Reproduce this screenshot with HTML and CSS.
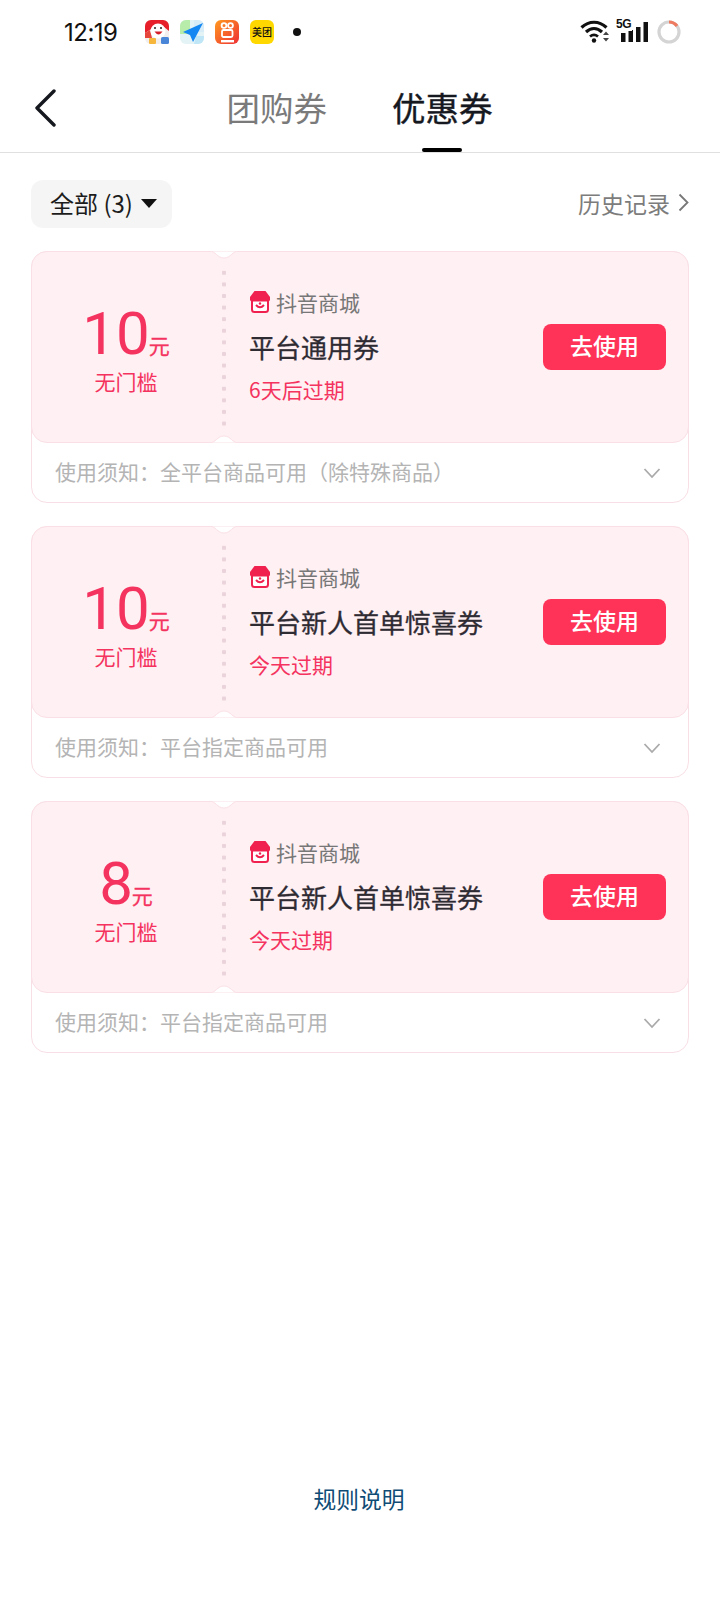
FILE: index.html
```html
<!DOCTYPE html>
<html lang="zh-CN">
<head>
<meta charset="UTF-8">
<title>优惠券</title>
<link rel="stylesheet" href="styles.css">
</head>
<body>
<div class="page">

  <div class="status">
    <span class="time">12:19</span>
    <div class="apps">
      <svg class="app" viewBox="0 0 24 24"><rect width="24" height="24" rx="6" fill="#f3eeee"/><path d="M0 13V6a6 6 0 0 1 6-6h12a6 6 0 0 1 6 6v5l-5-4-11 1z" fill="#e61f2b"/><path d="M0 13l5-3 2 8H0z" fill="#e5453a"/><circle cx="13" cy="11" r="7.500" fill="#fff"/><path d="M9.500 11.500q4 6 8 0z" fill="#d5202a"/><circle cx="10" cy="8" r="1" fill="#222"/><circle cx="16" cy="8" r="1" fill="#222"/><rect x="4" y="18" width="7" height="6" rx="1" fill="#f6b73c"/><rect x="16" y="17" width="8" height="7" rx="1.500" fill="#4a86d8"/></svg>
      <svg class="app" viewBox="0 0 24 24"><rect width="24" height="24" rx="6" fill="#e4f3f6"/><path d="M0 6a6 6 0 0 1 6-6h4v14H0z" fill="#b7ecab"/><path d="M14 0h4a6 6 0 0 1 6 6v6H14z" fill="#d7ecf7"/><path d="M14 24h4a6 6 0 0 0 6-6v-2h-8z" fill="#bfe6f7"/><path d="M23 3L3 12l7 3 3 7z" fill="#1487f2"/></svg>
      <svg class="app" viewBox="0 0 24 24"><defs><linearGradient id="ks" x1="0" y1="0" x2="1" y2="1"><stop offset="0" stop-color="#ff9a1f"/><stop offset="1" stop-color="#ee2f35"/></linearGradient></defs><rect width="24" height="24" rx="6" fill="url(#ks)"/><circle cx="9" cy="5.500" r="2.400" fill="none" stroke="#fff" stroke-width="1.800"/><circle cx="15.500" cy="5.500" r="2.400" fill="none" stroke="#fff" stroke-width="1.800"/><rect x="7" y="10" width="10.500" height="7" rx="1.500" fill="none" stroke="#fff" stroke-width="1.800"/><rect x="6" y="20" width="13" height="2.400" fill="#fff"/></svg>
      <div class="app app-mt">美团</div>
    </div>
    <span class="status-dot"></span>
    <div class="sys">
      <svg class="wifi" width="30" height="24" viewBox="0 0 30 24"><path d="M1.500 7.500C9 .5 19 .5 26.500 7.500" fill="none" stroke="#111" stroke-width="3.200"/><path d="M6 12c5-4.500 11-4.500 16 0" fill="none" stroke="#111" stroke-width="3.200"/><path d="M10 16.500c2.500-2 5.500-2 8 0" fill="none" stroke="#111" stroke-width="2.800"/><circle cx="14" cy="20.500" r="2.200" fill="#111"/><path d="M23 15l3-3.500 3 3.500zM23 18l3 3.500 3-3.500z" fill="#444"/></svg>
      <div class="signal">
        <span class="five-g">5G</span>
        <svg width="30" height="24" viewBox="0 0 30 24"><rect x="2" y="13" width="4.500" height="9" fill="#111"/><rect x="9.500" y="10" width="4.500" height="12" fill="#111"/><rect x="17" y="7" width="4.500" height="15" fill="#111"/><rect x="24.500" y="2" width="4.500" height="20" fill="#111"/></svg>
      </div>
      <svg class="battery" width="24" height="24" viewBox="0 0 24 24"><circle cx="12" cy="12" r="10" fill="none" stroke="#d4d4d4" stroke-width="3.200"/><path d="M12 2a10 10 0 0 1 8 4" fill="none" stroke="#ee7a5f" stroke-width="3.200"/></svg>
    </div>
  </div>

  <div class="nav">
    <svg class="back" width="24" height="38" viewBox="0 0 24 38"><path d="M20 2L3 19l17 17" fill="none" stroke="#16181f" stroke-width="3.400" stroke-linecap="round" stroke-linejoin="round"/></svg>
    <div class="tabs">
      <span class="tab">团购券</span>
      <span class="tab tab-on">优惠券</span>
    </div>
  </div>

  <div class="filters">
    <div class="chip">全部 (3)<span class="caret"></span></div>
    <div class="history">历史记录<svg width="11" height="19" viewBox="0 0 11 19"><path d="M1.500 1.500l8 8-8 8" fill="none" stroke="#777" stroke-width="1.800"/></svg></div>
  </div>

  <div class="list">

    <div class="card">
      <div class="ticket">
        <svg class="notch notch-top" width="30" height="8" viewBox="0 0 30 8"><path d="M0 0C7 0 8 7 15 7S23 0 30 0Z" fill="#fff" stroke="#fae0e6"/></svg>
        <svg class="notch notch-bot" width="30" height="8" viewBox="0 0 30 8"><path d="M0 8C7 8 8 1 15 1S23 8 30 8Z" fill="#fff" stroke="#fae0e6"/></svg>
        <div class="stub">
          <div class="amount"><span class="num">10</span><span class="unit">元</span></div>
          <div class="cond">无门槛</div>
        </div>
        <div class="dots"></div>
        <div class="info">
          <div class="brand">
            <svg class="shop" width="20" height="22" viewBox="0 0 20 22"><rect x="2" y="8" width="16" height="13" rx="2.500" fill="#fff" stroke="#f0214f" stroke-width="2"/><path d="M4.500 0h11L20 6v2.500a2 2 0 0 1-2 2H2a2 2 0 0 1-2-2V6z" fill="#f0214f"/><path d="M6 14q4 4.500 8 0" fill="none" stroke="#f0214f" stroke-width="2"/><circle cx="10" cy="12.500" r="1.200" fill="#f0214f"/></svg>
            抖音商城
          </div>
          <div class="title">平台通用券</div>
          <div class="expire">6天后过期</div>
        </div>
        <div class="use">去使用</div>
      </div>
      <div class="notice">
        <span>使用须知：全平台商品可用（除特殊商品）</span>
        <svg width="18" height="12" viewBox="0 0 18 12"><path d="M1.500 2l7.500 8 7.500-8" fill="none" stroke="#aaa" stroke-width="1.800"/></svg>
      </div>
    </div>

    <div class="card">
      <div class="ticket">
        <svg class="notch notch-top" width="30" height="8" viewBox="0 0 30 8"><path d="M0 0C7 0 8 7 15 7S23 0 30 0Z" fill="#fff" stroke="#fae0e6"/></svg>
        <svg class="notch notch-bot" width="30" height="8" viewBox="0 0 30 8"><path d="M0 8C7 8 8 1 15 1S23 8 30 8Z" fill="#fff" stroke="#fae0e6"/></svg>
        <div class="stub">
          <div class="amount"><span class="num">10</span><span class="unit">元</span></div>
          <div class="cond">无门槛</div>
        </div>
        <div class="dots"></div>
        <div class="info">
          <div class="brand">
            <svg class="shop" width="20" height="22" viewBox="0 0 20 22"><rect x="2" y="8" width="16" height="13" rx="2.500" fill="#fff" stroke="#f0214f" stroke-width="2"/><path d="M4.500 0h11L20 6v2.500a2 2 0 0 1-2 2H2a2 2 0 0 1-2-2V6z" fill="#f0214f"/><path d="M6 14q4 4.500 8 0" fill="none" stroke="#f0214f" stroke-width="2"/><circle cx="10" cy="12.500" r="1.200" fill="#f0214f"/></svg>
            抖音商城
          </div>
          <div class="title">平台新人首单惊喜券</div>
          <div class="expire">今天过期</div>
        </div>
        <div class="use">去使用</div>
      </div>
      <div class="notice">
        <span>使用须知：平台指定商品可用</span>
        <svg width="18" height="12" viewBox="0 0 18 12"><path d="M1.500 2l7.500 8 7.500-8" fill="none" stroke="#aaa" stroke-width="1.800"/></svg>
      </div>
    </div>

    <div class="card">
      <div class="ticket">
        <svg class="notch notch-top" width="30" height="8" viewBox="0 0 30 8"><path d="M0 0C7 0 8 7 15 7S23 0 30 0Z" fill="#fff" stroke="#fae0e6"/></svg>
        <svg class="notch notch-bot" width="30" height="8" viewBox="0 0 30 8"><path d="M0 8C7 8 8 1 15 1S23 8 30 8Z" fill="#fff" stroke="#fae0e6"/></svg>
        <div class="stub">
          <div class="amount"><span class="num">8</span><span class="unit">元</span></div>
          <div class="cond">无门槛</div>
        </div>
        <div class="dots"></div>
        <div class="info">
          <div class="brand">
            <svg class="shop" width="20" height="22" viewBox="0 0 20 22"><rect x="2" y="8" width="16" height="13" rx="2.500" fill="#fff" stroke="#f0214f" stroke-width="2"/><path d="M4.500 0h11L20 6v2.500a2 2 0 0 1-2 2H2a2 2 0 0 1-2-2V6z" fill="#f0214f"/><path d="M6 14q4 4.500 8 0" fill="none" stroke="#f0214f" stroke-width="2"/><circle cx="10" cy="12.500" r="1.200" fill="#f0214f"/></svg>
            抖音商城
          </div>
          <div class="title">平台新人首单惊喜券</div>
          <div class="expire">今天过期</div>
        </div>
        <div class="use">去使用</div>
      </div>
      <div class="notice">
        <span>使用须知：平台指定商品可用</span>
        <svg width="18" height="12" viewBox="0 0 18 12"><path d="M1.500 2l7.500 8 7.500-8" fill="none" stroke="#aaa" stroke-width="1.800"/></svg>
      </div>
    </div>

  </div>

  <div class="rules">规则说明</div>

</div>
</body>
</html>
```

FILE: styles.css
```css
* {
  box-sizing: border-box;
}

body {
  margin: 0;
  background-color: #fff;
  font-family: "Noto Sans CJK SC", Roboto, sans-serif;
}

.page {
  height: 1612px;
  display: flex;
  flex-direction: column;
}

/* barra de estado */
.status {
  height: 64px;
  display: flex;
  align-items: center;
  padding-left: 64px;
}

.time {
  font-family: Inter, Roboto, sans-serif;
  font-size: 24px;
  letter-spacing: -0.5px;
  color: #111;
  width: 81px;
}

.apps {
  display: flex;
  gap: 11px;
}

.app {
  width: 24px;
  height: 24px;
  display: block;
}

.app-mt {
  background-color: #ffd800;
  border-radius: 6px;
  font-size: 10px;
  line-height: 24px;
  text-align: center;
  color: #111;
  font-weight: 500;
}

.status-dot {
  width: 8px;
  height: 8px;
  border-radius: 50%;
  background-color: #111;
  margin-left: 19px;
}

.sys {
  margin-left: auto;
  display: flex;
  align-items: center;
  padding-right: 39px;
}

.signal {
  position: relative;
  margin-left: 9px;
  width: 30px;
  height: 24px;
}

.signal svg {
  display: block;
}

.five-g {
  position: absolute;
  left: -3px;
  top: -3px;
  font-family: "Liberation Sans", sans-serif;
  font-weight: 700;
  font-size: 12px;
  letter-spacing: -0.5px;
  color: #111;
  background-color: #fff;
  line-height: 14px;
  padding-right: 1px;
}

.battery {
  margin-left: 8px;
}

/* cabecera */
.nav {
  height: 89px;
  position: relative;
  border-bottom: 1px solid #e0e0e0;
  display: flex;
  justify-content: center;
}

.back {
  position: absolute;
  left: 34px;
  top: 25px;
}

.tabs {
  display: flex;
  gap: 65px;
  padding-right: 1px;
}

.tab {
  position: relative;
  font-size: 33.5px;
  line-height: 44px;
  padding-top: 21px;
  color: #7a7a7a;
}

.tab-on {
  color: #16181f;
  -webkit-text-stroke: 0.4px #16181f;
}

.tab-on::after {
  content: "";
  position: absolute;
  left: 30px;
  bottom: 0;
  width: 40px;
  height: 4px;
  border-radius: 2px;
  background-color: #000;
}

/* filtros */
.filters {
  display: flex;
  justify-content: space-between;
  align-items: center;
  padding: 27px 31px 23px;
}

.chip {
  width: 141px;
  height: 48px;
  border-radius: 12px;
  background-color: #f5f5f5;
  display: flex;
  align-items: center;
  padding: 0 0 3px 19px;
  font-size: 24px;
  color: #1c1c1c;
}

.caret {
  margin: 2px 0 0 8px;
  border-left: 8px solid transparent;
  border-right: 8px solid transparent;
  border-top: 9px solid #111;
}

.history {
  display: flex;
  align-items: center;
  gap: 8px;
  padding-bottom: 3px;
  font-size: 23px;
  color: #7c7c7c;
}

/* cupones */
.list {
  display: flex;
  flex-direction: column;
  gap: 23px;
  padding: 0 31px;
}

.card {
  height: 252px;
  border: 1px solid #f8dfe5;
  border-radius: 16px;
  background-color: #fff;
}

.ticket {
  position: relative;
  height: 192px;
  margin: -1px -1px 0;
  border: 1px solid #fae0e6;
  border-radius: 16px;
  background-color: #fff0f3;
  display: flex;
  align-items: center;
}

.notch {
  position: absolute;
  left: 177px;
}

.notch-top {
  top: -1px;
}

.notch-bot {
  bottom: -1px;
}

.stub {
  width: 188px;
  text-align: center;
  padding-top: 4px;
}

.amount {
  color: #f4335f;
  line-height: 62px;
  height: 63px;
}

.num {
  font-family: Roboto, sans-serif;
  font-size: 60px;
}

.unit {
  font-size: 21px;
  margin-left: -1px;
  -webkit-text-stroke: 0.3px #f4335f;
}

.cond {
  font-size: 21px;
  line-height: 30px;
  color: #f4335f;
}

.dots {
  position: absolute;
  left: 190px;
  top: 15px;
  bottom: 14px;
  width: 4px;
  background-image: radial-gradient(circle, #ead3da 2px, transparent 2.5px);
  background-size: 4px 11.6px;
}

.info {
  flex: 1;
  padding-left: 29px;
  margin-top: -2px;
}

.brand {
  display: flex;
  align-items: center;
  gap: 6px;
  font-size: 21px;
  line-height: 30px;
  color: #777;
  margin-top: -1px;
  padding-left: 1px;
}

.title {
  font-size: 26px;
  line-height: 38px;
  margin-top: 11px;
  color: #2f2b33;
  -webkit-text-stroke: 0.3px #2f2b33;
}

.expire {
  font-size: 21px;
  line-height: 30px;
  margin-top: 8px;
  color: #f4335f;
}

.use {
  width: 123px;
  height: 46px;
  margin-right: 22px;
  border-radius: 8px;
  background-color: #ff3358;
  color: #fff;
  font-size: 23px;
  font-weight: 500;
  line-height: 42px;
  text-align: center;
}

.notice {
  height: 59px;
  display: flex;
  justify-content: space-between;
  align-items: center;
  padding: 0 27px 0 23px;
  font-size: 21px;
  color: #b4b4b4;
}

.notice span {
  margin-top: -3px;
}

/* pie */
.rules {
  margin-top: auto;
  padding: 0 2px 96px 0;
  text-align: center;
  font-size: 22.75px;
  line-height: 34px;
  color: #0f4c75;
}
```
